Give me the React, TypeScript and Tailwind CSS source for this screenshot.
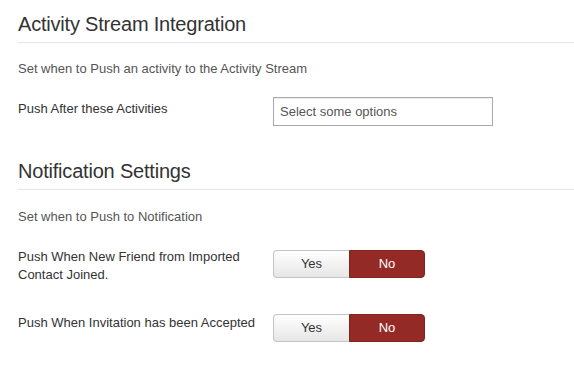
import React from "react";

function YesNo() {
  return (
    <div className="flex h-[28px] text-[13px]">
      <button className="w-[76px] h-full rounded-l-[4px] border border-[#c5c5c5] border-r-0 bg-gradient-to-b from-white to-[#e6e6e6] text-[#333]">
        Yes
      </button>
      <button className="w-[76px] h-full rounded-r-[4px] border border-[#7e231f] bg-[#942a25] text-white">
        No
      </button>
    </div>
  );
}

export default function App() {
  return (
    <div
      className="w-[574px] h-[372px] bg-white pl-[18px] text-[13px] leading-[18px] text-[#333]"
      style={{ fontFamily: '"Liberation Sans", Arial, sans-serif' }}
    >
      <div className="pt-[4px]">
        <div className="h-[39px] leading-[41px] text-[20px] tracking-[-0.2px] border-b border-[#e5e5e5] text-[#333]">
          Activity Stream Integration
        </div>
        <p className="mt-[17px] text-[#555]">Set when to Push an activity to the Activity Stream</p>
        <div className="mt-[19px] flex items-start">
          <div className="w-[255px] pt-[3px]">Push After these Activities</div>
          <div className="w-[220px] h-[29px] border border-[#aaa] shadow-[inset_0_1px_1px_rgba(0,0,0,0.08)] flex items-center pl-[6px] text-[#555]">
            Select some options
          </div>
        </div>
      </div>
      <div className="mt-[25px]">
        <div className="h-[39px] leading-[41px] text-[20px] tracking-[-0.2px] border-b border-[#e5e5e5] text-[#333]">
          Notification Settings
        </div>
        <p className="mt-[18px] text-[#555]">Set when to Push to Notification</p>
        <div className="mt-[22px] flex items-start">
          <div className="w-[255px]">
            <div className="w-[240px]">Push When New Friend from Imported Contact Joined.</div>
          </div>
          <div className="mt-[2px]">
            <YesNo />
          </div>
        </div>
        <div className="mt-[30px] flex items-start">
          <div className="w-[255px]">Push When Invitation has been Accepted</div>
          <YesNo />
        </div>
      </div>
    </div>
  );
}
